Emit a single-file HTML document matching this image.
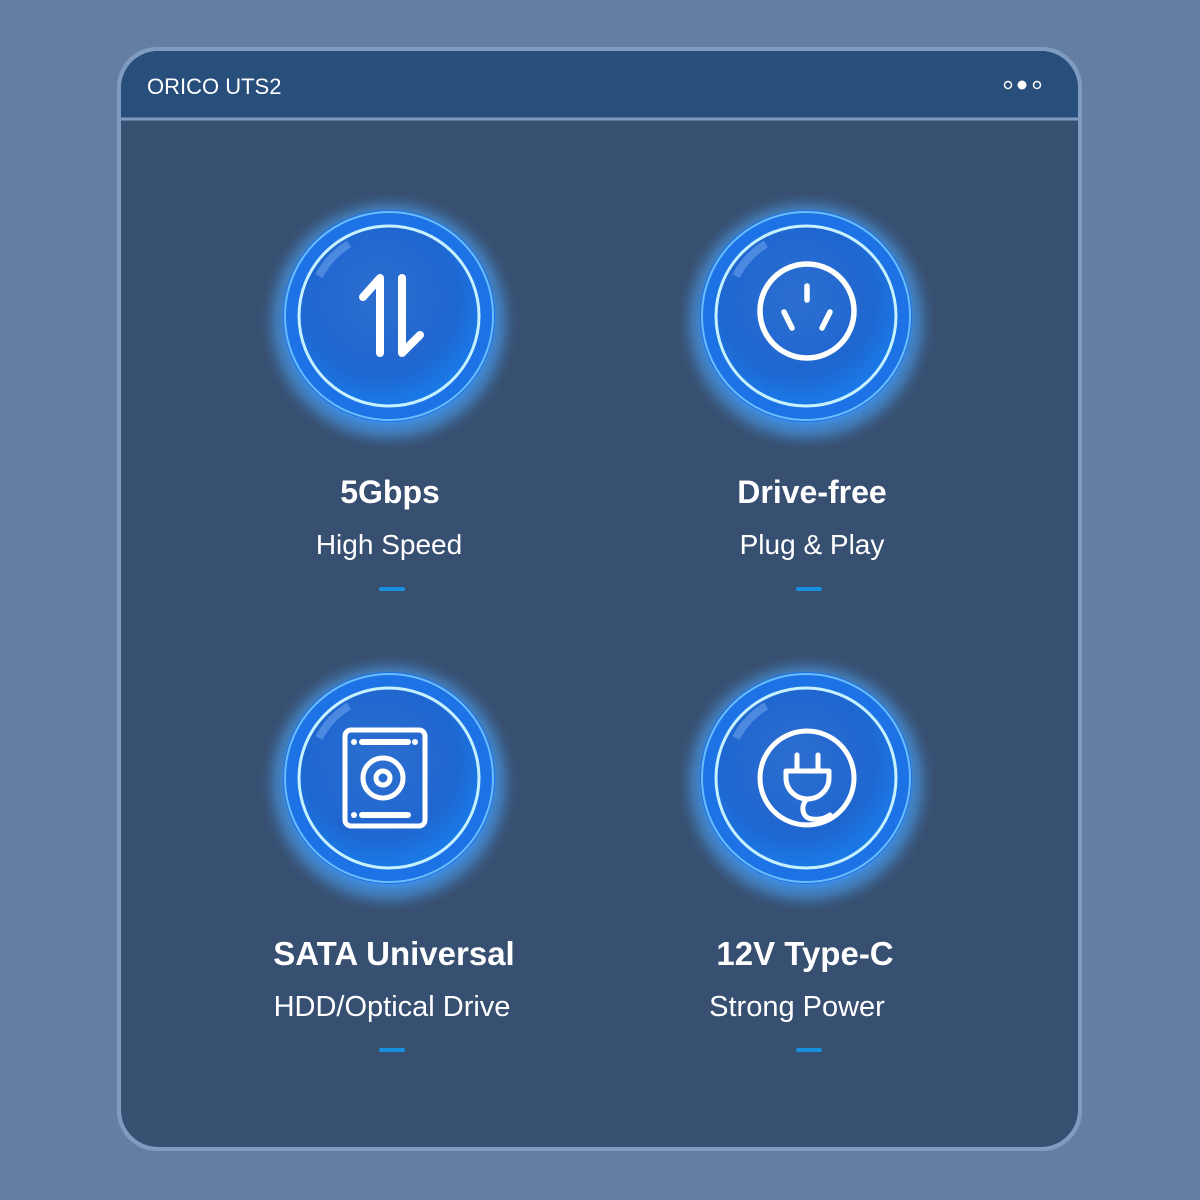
<!DOCTYPE html>
<html><head><meta charset="utf-8"><style>
html,body{margin:0;padding:0;width:1200px;height:1200px;background:#637ea2;overflow:hidden}
svg{display:block}
</style></head><body>
<svg width="1200" height="1200" viewBox="0 0 1200 1200" xmlns="http://www.w3.org/2000/svg">
<defs>
<radialGradient id="glow" cx="50%" cy="52%" r="50%">
<stop offset="0.72" stop-color="#3b97ff" stop-opacity="1"/>
<stop offset="0.86" stop-color="#4a9cec" stop-opacity="0.5"/>
<stop offset="1" stop-color="#374f70" stop-opacity="0"/>
</radialGradient>
<radialGradient id="ball" cx="45%" cy="40%" r="60%">
<stop offset="0" stop-color="#2d6fd0"/>
<stop offset="0.7" stop-color="#1f66d0"/>
<stop offset="1" stop-color="#1a7ae8"/>
</radialGradient>
<g id="orb">
<circle r="132" fill="url(#glow)"/>
<circle r="106" fill="#1d72e6"/>
<circle r="104" fill="none" stroke="#7dd0ff" stroke-width="2" opacity="0.8"/>
<circle r="90" fill="url(#ball)"/>
<circle r="90" fill="none" stroke="#c6f2ff" stroke-width="3"/>
<path d="M-70,-40 A80,80 0 0 1 -40,-72" stroke="#9cc8ff" stroke-width="8" fill="none" opacity="0.35"/>
</g>
</defs>
<rect x="117" y="47" width="965" height="1104" rx="40" fill="#7f9cc0"/>
<rect x="121" y="51" width="957" height="1096" rx="37" fill="#374f70"/>
<path d="M157,51 H1041 A37,37 0 0 1 1078,88 V118 H121 V88 A37,37 0 0 1 157,51 Z" fill="#284e7c"/>
<line x1="119" y1="119" x2="1080" y2="119" stroke="#7f9cc0" stroke-width="3"/>
<text x="147" y="94" font-family="Liberation Sans, sans-serif" font-size="22" fill="#fff">ORICO UTS2</text>
<circle cx="1008" cy="85" r="3.5" fill="none" stroke="#fff" stroke-width="1.5"/>
<circle cx="1022" cy="85" r="4.5" fill="#fff"/>
<circle cx="1037" cy="85" r="3.5" fill="none" stroke="#fff" stroke-width="1.5"/>

<use href="#orb" x="389" y="316"/>
<use href="#orb" x="806" y="316"/>
<use href="#orb" x="389" y="778"/>
<use href="#orb" x="806" y="778"/>

<g stroke="#fff" stroke-width="8" stroke-linecap="round" stroke-linejoin="round" fill="none">
<path d="M380,353 V278 L363,297"/>
<path d="M402,278 V353 L420,335"/>
</g>
<g stroke="#fff" stroke-width="5.5" stroke-linecap="round" fill="none">
<circle cx="807" cy="311" r="47"/>
<path d="M807,286 V300 M784,312 L792,328 M830,312 L822,328"/>
</g>
<g stroke="#fff" stroke-width="5" stroke-linecap="round" fill="none">
<rect x="345" y="730" width="80" height="96" rx="6"/>
<circle cx="383" cy="778" r="20"/>
<circle cx="383" cy="778" r="7"/>
<path d="M362,742 H408 M362,815 H408" stroke-width="6"/>
</g>
<g fill="#fff"><circle cx="354" cy="742" r="3"/><circle cx="415" cy="742" r="3"/><circle cx="354" cy="815" r="3"/></g>
<g stroke="#fff" stroke-width="5" stroke-linecap="round" stroke-linejoin="round" fill="none">
<circle cx="807" cy="778" r="47"/>
<path d="M797,755 V770 M818,755 V770"/>
<path d="M786,771 H829 V778 A21.5,21 0 0 1 786,778 Z"/>
<path d="M807,799 C800,806 802,818 812,819 C820,820 826,818 830,815"/>
</g>

<g font-family="Liberation Sans, sans-serif" fill="#fff" text-anchor="middle">
<text x="390" y="503" font-size="32" font-weight="bold">5Gbps</text>
<text x="389" y="554" font-size="28">High Speed</text>
<text x="812" y="503" font-size="32" font-weight="bold">Drive-free</text>
<text x="812" y="554" font-size="28">Plug &amp; Play</text>
<text x="394" y="965" font-size="33" font-weight="bold">SATA Universal</text>
<text x="392" y="1016" font-size="29">HDD/Optical Drive</text>
<text x="805" y="965" font-size="33" font-weight="bold">12V Type-C</text>
<text x="797" y="1016" font-size="29">Strong Power</text>
</g>
<g stroke="#1a8fe0" stroke-width="4" stroke-linecap="round">
<path d="M381,589 H403 M798,589 H820 M381,1050 H403 M798,1050 H820"/>
</g>
</svg>
</body></html>
